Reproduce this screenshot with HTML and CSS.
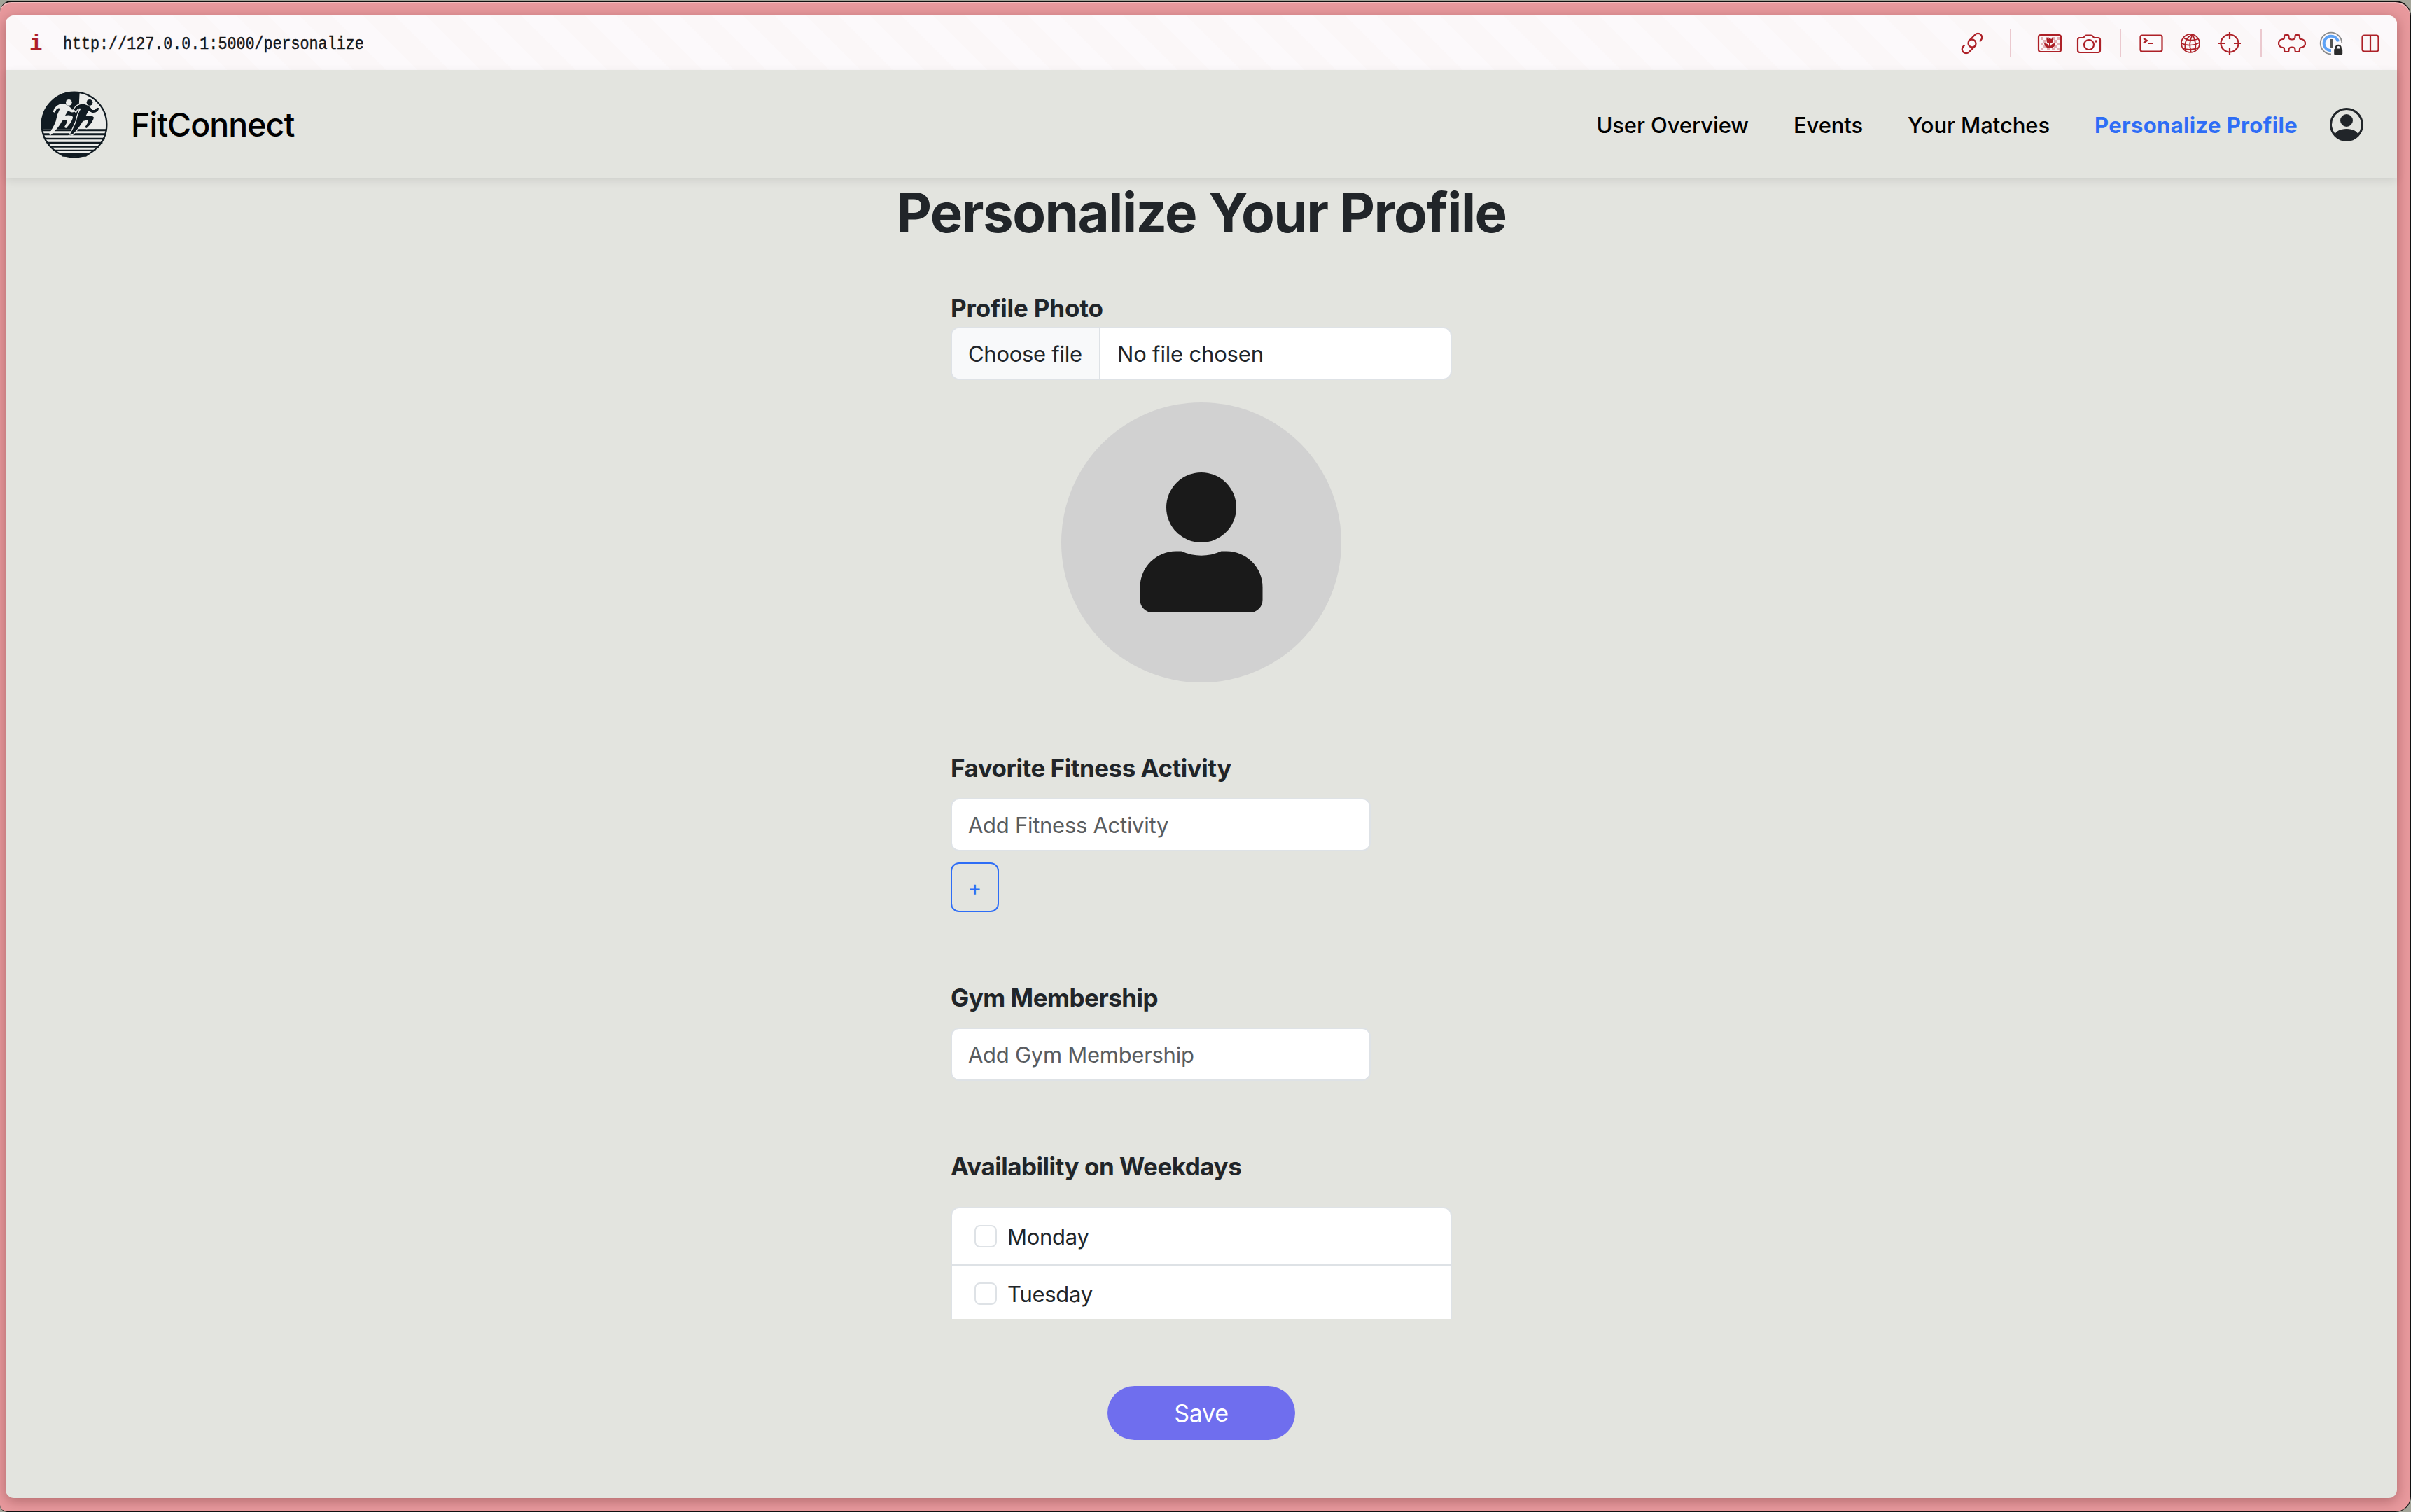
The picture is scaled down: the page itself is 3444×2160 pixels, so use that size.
FILE: index.html
```html
<!DOCTYPE html>
<html lang="en">
<head>
<meta charset="utf-8">
<title>FitConnect</title>
<link rel="stylesheet" href="styles.css">
</head>
<body>
<div class="window">
  <div class="viewport">
    <div class="toolbar">
      <span class="info">i</span>
      <span class="url">http://127.0.0.1:5000/personalize</span>
      <div class="tools">
        <svg class="tool" viewBox="-20 -20 40 40"><g transform="rotate(-45) scale(1.06)"><path id="half-link" d="M-9 -5.4H-11.3A5.4 5.4 0 0 0 -11.3 5.4H-.3A5.4 5.4 0 0 0 -.3 -5.4H-2"/><use href="#half-link" transform="rotate(180)"/></g></svg>
        <span class="sep wide"></span>
        <div class="group">
          <svg class="tool" viewBox="-20 -20 40 40">
            <path class="checks" d="M-13-9h4v4h-4zM-5-9h4v4h-4zM3-9h4v4h-4zM10-9h4v4h-4zM-9-5h4v4h-4zM6-5h4v4h-4zM-13-1h4v4h-4zM10-1h4v4h-4zM-9 3h4v4h-4zM6 3h4v4h-4zM-13 6h4v4h-4zM-4 6h4v4h-4zM3 6h4v4h-4zM10 6h4v4h-4z"/>
            <rect x="-16" y="-12" width="32" height="24" rx="3"/>
            <path class="solid" d="M-4.500-8 L-2-6 L0-8 L2-6 L4.500-8 V-4 Q4.500 0 1 0 V4 Q3-.5 8 0 Q7 7 0 7 Q-7 7-8 0 Q-3-.5-1 4 V0 Q-4.500 0-4.500-4z"/>
          </svg>
          <svg class="tool" viewBox="-20 -20 40 40"><path d="M-13.500-8H-9Q-7.500-8-6.500-9.500T-4-11.500H3Q5-11.500 6-9.500T9-8H13Q16-8 16-5V10Q16 13 13 13H-13Q-16 13-16 10V-5Q-16-8-13.500-8z"/><circle cy="2" r="7"/><circle class="solid" cx="10" cy="-3" r="1.700"/></svg>
        </div>
        <span class="sep"></span>
        <div class="group">
          <svg class="tool" viewBox="-20 -20 40 40"><rect x="-15.500" y="-11.500" width="31" height="23" rx="2.500"/><path d="M-11-7L-6-4L-11-.5M-4 0H2.500"/></svg>
          <svg class="tool thin" viewBox="-20 -20 40 40"><circle r="13"/><path d="M3-12.500C-6-9-9 0-7 11M3-12.500C-1-5-2 4 1 13M3-12.500C7-5 8 3 7 10.500M-10-8C-3-3 6-4 11.500-6.500M-13 0C-5 4 6 3 13-1M-11 7C-3 10 5 9 11.500 6"/></svg>
          <svg class="tool" viewBox="-20 -20 40 40"><circle r="12.500"/><path d="M0-16V-6M0 6V16M-16 0H-6M6 0H16"/></svg>
        </div>
        <span class="sep"></span>
        <div class="group">
          <svg class="tool" viewBox="-20 -20 40 40"><path d="M-9-12H-6Q-4.500-12-4.500-10V-9Q-4.500-5.500 0-5.500T4.500-9V-10Q4.500-12 6-12H9Q11-12 11-10V-8Q11-6 13-6A6 6 0 0 1 13 6Q11 6 11 8V10Q11 12 9 12H6Q4.500 12 4.500 10V9Q4.500 5.500 0 5.500T-4.500 9V10Q-4.500 12-6 12H-9Q-11 12-11 10V8Q-11 6-13 6A6 6 0 0 1-13-6Q-11-6-11-8V-10Q-11-12-9-12z"/></svg>
          <svg class="tool" viewBox="-20 -20 40 40"><path class="ring-outer" d="M0 15.300A15.300 15.300 0 1 1 15.300 0"/><path class="ring-inner" d="M0 10.300A10.300 10.300 0 1 1 10-2.500"/><path class="ring-bar" d="M0-6V6"/><path class="lock-shackle" d="M6.700 9V6.300a3.500 3.500 0 0 1 7 0V9"/><rect class="lock" x="4.200" y="7.500" width="12" height="8.800" rx="1.500"/></svg>
          <svg class="tool" viewBox="-20 -20 40 40"><rect x="-11.500" y="-11.500" width="23" height="23" rx="3"/><path d="M0-11V11"/></svg>
        </div>
      </div>
    </div>

    <header class="header">
      <svg class="logo" viewBox="55 29 288 288">
        <circle class="paper" cx="199" cy="173" r="140"/>
        <path class="ink" d="M199 32A141 141 0 0 0 59 192H190L217 130L222 34Z"/>
        <path class="ink" d="M60 192H338V201H62zM64 210H336V219H66zM70 229H330V237H73zM80 247H320V255H84zM92 264H307V271H98zM108 280H290V287H116zM128 295H270L250 310H150z"/>
        <path class="paper" d="M108 118Q118 82 155 84Q178 90 188 108Q200 112 212 96L216 104Q206 122 186 120L172 114L160 134Q185 130 193 140Q192 160 164 188L156 184Q168 168 170 152L148 156Q130 190 98 218L90 214Q112 180 120 158Q124 130 138 104Q124 98 116 122Z"/>
        <circle class="paper" cx="176" cy="78" r="13"/>
        <path class="runner-dark" d="M198 108Q212 82 243 86Q266 92 276 110Q290 112 296 100L305 102Q302 124 276 122L260 114L248 136Q275 132 283 142Q280 162 252 188L244 184Q258 168 260 152L236 158Q218 190 190 216L182 212Q200 180 208 158Q212 130 228 104Q212 100 206 118Z"/>
        <circle class="ink" cx="265" cy="78" r="13"/>
        <path class="edge" d="M92 226H170L178 218M70 205H90"/>
        <circle class="rim" cx="199" cy="173" r="139"/>
      </svg>
      <span class="brand">FitConnect</span>
      <nav class="nav">
        <a>User Overview</a>
        <a>Events</a>
        <a>Your Matches</a>
        <a class="active">Personalize Profile</a>
      </nav>
      <svg class="account" viewBox="0 0 16 16"><path d="M11 6a3 3 0 1 1-6 0 3 3 0 0 1 6 0"/><path fill-rule="evenodd" d="M0 8a8 8 0 1 1 16 0A8 8 0 0 1 0 8m8-7a7 7 0 0 0-5.468 11.370C3.242 11.226 4.805 10 8 10s4.757 1.225 5.468 2.370A7 7 0 0 0 8 1"/></svg>
    </header>

    <main class="main">
      <h1 class="title">Personalize Your Profile</h1>
      <form class="form">
        <label class="label photo">Profile Photo</label>
        <div class="file"><span class="file-button">Choose file</span><span class="file-name">No file chosen</span></div>
        <svg class="avatar" viewBox="0 0 400 400">
          <circle class="avatar-bg" cx="200" cy="200" r="200"/>
          <circle cx="200" cy="150" r="50"/>
          <path d="M164 212.500H171.500Q200 225 228.500 212.500H236A51.500 51.500 0 0 1 287.500 264V282A18 18 0 0 1 269.500 300H130.500A18 18 0 0 1 112.500 282V264A51.500 51.500 0 0 1 164 212.500Z"/>
        </svg>
        <label class="label">Favorite Fitness Activity</label>
        <input class="input" type="text" placeholder="Add Fitness Activity">
        <button class="add" type="button">+</button>
        <label class="label">Gym Membership</label>
        <input class="input" type="text" placeholder="Add Gym Membership">
        <label class="label">Availability on Weekdays</label>
        <div class="days">
          <div class="day"><span class="box"></span>Monday</div>
          <div class="day"><span class="box"></span>Tuesday</div>
        </div>
        <button class="save" type="button">Save</button>
      </form>
    </main>
  </div>
</div>
</body>
</html>
```
FILE: styles.css
```css
* { box-sizing: border-box; }

body {
  margin: 0;
  height: 2160px;
  padding-top: 1px;
  overflow: hidden;
  background: #a3a599;
  font-family: Inter, "Liberation Sans", sans-serif;
  color: #212529;
}

.window {
  height: 2159px;
  padding: 18px 18px 19px 8px;
  border: solid #111;
  border-width: 2px 1px 1px 0;
  border-radius: 16px 22px 22px 10px;
  background: #e8999d;
  box-shadow: inset 0 2px 0 #f1bcbd;
}

.viewport {
  width: 3416px;
  height: 2118px;
  margin-top: 1px;
  border-radius: 12px;
  background: #e3e4df;
  box-shadow: 0 4px 18px rgba(60, 10, 10, 0.33);
}

.toolbar {
  display: flex;
  align-items: center;
  height: 78px;
  padding: 2px 18px 0 34px;
  border-radius: 12px 12px 0 0;
  background: repeating-linear-gradient(45deg, #fcf9fb 0 32px, #fbf7f8 32px 64px);
}

.info {
  width: 48px;
  padding-top: 2px;
  font: bold 31px/40px "Liberation Mono", monospace;
  color: #ad2027;
}

.url {
  padding-top: 4px;
  font: 25px/40px "Liberation Mono", monospace;
  color: #16181b;
  -webkit-text-stroke: 0.5px #16181b;
  transform: scaleX(0.868);
  transform-origin: left;
}

.tools { display: flex; align-items: center; margin-left: auto; }
.group { display: flex; gap: 16px; }
.sep { width: 2px; height: 40px; margin: 0 23px 0 24px; background: #ebc9cf; }
.sep.wide { margin: 0 35px 0 34px; }

.tool {
  display: block;
  width: 40px;
  height: 40px;
  fill: none;
  stroke: #ad2027;
  stroke-width: 2.200;
}
.tool.thin { stroke-width: 1.700; }
.tool .solid { fill: #ad2027; stroke: none; }
.tool .checks { fill: #e2aeb3; stroke: none; }
.tool .ring-outer { stroke: #8c8c8c; stroke-width: 1.800; }
.tool .ring-inner { stroke: #5ea2f5; stroke-width: 4; }
.tool .ring-bar { stroke: #555; stroke-width: 4; }
.tool .lock-shackle { stroke: #2b2b2b; }
.tool .lock { fill: #2b2b2b; stroke: none; }

.header {
  display: flex;
  align-items: center;
  height: 154px;
  padding: 0 48px 0 50px;
  box-shadow: 0 4px 12px rgba(0, 0, 0, 0.09);
}

.logo { width: 96px; height: 96px; margin-top: 2px; fill: none; stroke-linecap: round; stroke-linejoin: round; }
.logo .paper { fill: #ebecea; }
.logo .ink { fill: #111b22; }
.logo .rim { stroke: #111b22; stroke-width: 7; }
.logo .runner-dark { fill: #111b22; stroke: #ebecea; stroke-width: 8; paint-order: stroke; }
.logo .edge { stroke: #ebecea; stroke-width: 4; }

.brand {
  margin: 2px 0 0 33px;
  font-size: 46.500px;
  font-weight: 500;
  letter-spacing: -0.980px;
  color: #000;
}

.nav {
  display: flex;
  gap: 64px;
  margin: 3px 46px 0 auto;
  font-size: 31px;
  font-weight: 500;
  letter-spacing: -0.100px;
  color: #000;
}
.nav .active { font-weight: 700; letter-spacing: 0.360px; color: #2e6df6; }

.account { width: 48px; height: 48px; margin-top: 2px; fill: #212529; }

.main { display: flex; flex-direction: column; align-items: center; padding-top: 2px; }

.title {
  margin: 0;
  font-size: 78px;
  line-height: 96px;
  font-weight: 700;
  letter-spacing: -1.520px;
}

.form { display: flex; flex-direction: column; align-items: flex-start; width: 716px; }

.label {
  margin: 95px 0 16px;
  font-size: 35px;
  line-height: 54px;
  font-weight: 700;
  letter-spacing: -0.500px;
}
.label.photo { margin: 62px 0 0; line-height: 53px; letter-spacing: -0.140px; }

.file, .input {
  height: 76px;
  border: 2px solid #dee2e6;
  border-radius: 12px;
  background: #fff;
  font-size: 31px;
  letter-spacing: -0.280px;
}

.file { display: flex; width: 716px; overflow: hidden; line-height: 74px; }
.file-button { width: 212px; padding-left: 23px; border-right: 2px solid #dee2e6; background: #f8f9fa; }
.file-name { padding-left: 24px; letter-spacing: -0.180px; }

.input { width: 600px; padding: 1px 23px 0; font-family: inherit; }
.input::placeholder { color: #595c5f; opacity: 1; }

.avatar { align-self: center; width: 400px; height: 400px; margin-top: 32px; fill: #1a1a1a; }
.avatar .avatar-bg { fill: #d1d1d1; }

.add {
  width: 69px;
  height: 71px;
  margin-top: 16px;
  padding: 2px 0 0;
  border: 2px solid #2e6df6;
  border-radius: 12px;
  background: none;
  font: 500 29px/65px Inter, sans-serif;
  color: #2e6df6;
}

.days {
  width: 716px;
  height: 160px;
  margin-top: 15px;
  overflow: hidden;
  border: solid #dee2e6;
  border-width: 2px 2px 0;
  border-radius: 12px 12px 0 0;
  background: #fff;
}
.day {
  display: flex;
  align-items: center;
  gap: 15px;
  height: 82px;
  padding-left: 32px;
  border-bottom: 2px solid #dee2e6;
  font-size: 31px;
  letter-spacing: -0.280px;
}
.box { width: 32px; height: 32px; border: 2px solid #dee2e6; border-radius: 8px; }

.save {
  align-self: center;
  width: 268px;
  height: 77px;
  margin-top: 96px;
  padding: 0;
  border: 0;
  border-radius: 39px;
  background: #6f6eee;
  font: 400 34px/76px Inter, sans-serif;
  letter-spacing: -0.300px;
  color: #fff;
}
```
